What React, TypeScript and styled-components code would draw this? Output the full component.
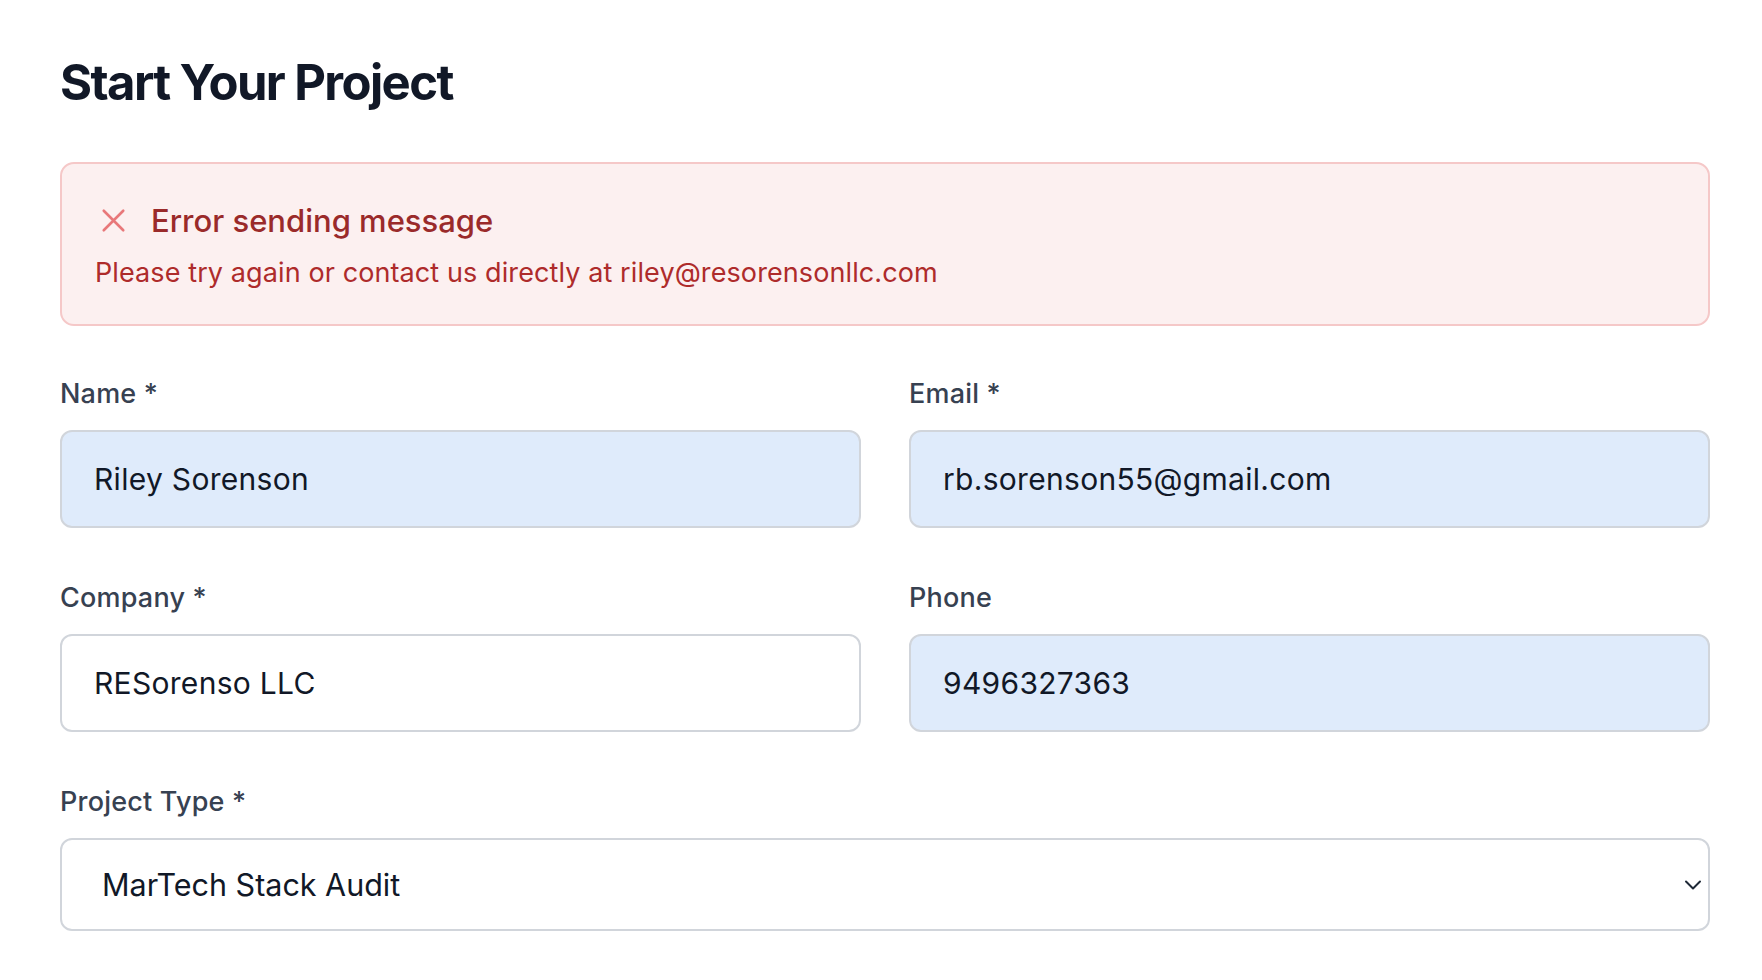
import React from 'react';
import styled, { createGlobalStyle } from 'styled-components';

const GlobalStyle = createGlobalStyle`
  body {
    margin: 0;
    background: #ffffff;
    font-family: Inter, "Noto Sans", "Liberation Sans", sans-serif;
  }
`;

const Page = styled.main`
  padding: 53px 0 40px 60px;
  width: 1650px;
`;

const Title = styled.h1`
  margin: 0 0 49px;
  font-size: 49px;
  line-height: 60px;
  font-weight: 700;
  color: #111827;
  letter-spacing: -1.6px;
`;

const Alert = styled.div`
  border: 2px solid #f5c8c8;
  background: #fcf0f0;
  border-radius: 14px;
  padding: 37px 33px 33px;
  margin-bottom: 50px;
`;

const AlertHead = styled.div`
  display: flex;
  align-items: center;
  gap: 18px;
  margin-bottom: 15px;
  margin-left: -1px;
`;

const AlertTitle = styled.h3`
  margin: 0;
  font-size: 31px;
  line-height: 36px;
  font-weight: 500;
  color: #9a2a2a;
`;

const AlertText = styled.p`
  margin: 0;
  font-size: 27px;
  line-height: 36px;
  color: #ae2b2b;
  letter-spacing: 0.1px;
`;

const Grid = styled.div`
  display: grid;
  grid-template-columns: 1fr 1fr;
  column-gap: 48px;
  row-gap: 52px;
`;

const Field = styled.div<{ $wide?: boolean }>`
  display: flex;
  flex-direction: column;
  grid-column: ${(p) => (p.$wide ? '1 / -1' : 'auto')};
`;

const Label = styled.label`
  font-size: 27px;
  line-height: 36px;
  font-weight: 500;
  color: #374151;
  letter-spacing: 0.2px;
  margin-bottom: 18px;
`;

const Input = styled.input<{ $filled?: boolean }>`
  box-sizing: border-box;
  height: 98px;
  width: 100%;
  padding: 0 32px;
  border: 2px solid #d1d5db;
  border-radius: 12px;
  background: ${(p) => (p.$filled ? '#dfebfb' : '#ffffff')};
  font-family: inherit;
  font-size: 30px;
  letter-spacing: 0.3px;
  color: #111827;
  outline: none;
`;

const SelectWrap = styled.div`
  position: relative;
`;

const Select = styled.select`
  box-sizing: border-box;
  appearance: none;
  height: 93px;
  width: 100%;
  padding: 0 40px;
  border: 2px solid #d1d5db;
  border-radius: 12px;
  background: #ffffff;
  font-family: inherit;
  font-size: 30.5px;
  color: #111827;
  outline: none;
`;

const Chevron = styled.svg`
  position: absolute;
  right: 8px;
  top: 50%;
  margin-top: -6px;
  pointer-events: none;
`;

const XIcon = () => (
  <svg width="39" height="39" viewBox="0 0 24 24" fill="none" stroke="#e8787a" strokeWidth="1.6" strokeLinecap="round" strokeLinejoin="round">
    <path d="M6 18 18 6M6 6l12 12" />
  </svg>
);

export default function App() {
  return (
    <>
      <GlobalStyle />
      <Page>
        <Title>Start Your Project</Title>

        <Alert>
          <AlertHead>
            <XIcon />
            <AlertTitle>Error sending message</AlertTitle>
          </AlertHead>
          <AlertText>Please try again or contact us directly at riley@resorensonllc.com</AlertText>
        </Alert>

        <Grid>
          <Field>
            <Label>Name *</Label>
            <Input $filled defaultValue="Riley Sorenson" />
          </Field>
          <Field>
            <Label>Email *</Label>
            <Input $filled defaultValue="rb.sorenson55@gmail.com" />
          </Field>
          <Field>
            <Label>Company *</Label>
            <Input defaultValue="RESorenso LLC" />
          </Field>
          <Field>
            <Label>Phone</Label>
            <Input $filled defaultValue="9496327363" />
          </Field>
          <Field $wide>
            <Label>Project Type *</Label>
            <SelectWrap>
              <Select defaultValue="audit">
                <option value="audit">MarTech Stack Audit</option>
              </Select>
              <Chevron width="18" height="12" viewBox="0 0 18 12" fill="none" stroke="#1f2937" strokeWidth="2" strokeLinecap="round" strokeLinejoin="round">
                <path d="M2 2.5 9 9.5 16 2.5" />
              </Chevron>
            </SelectWrap>
          </Field>
        </Grid>
      </Page>
    </>
  );
}
